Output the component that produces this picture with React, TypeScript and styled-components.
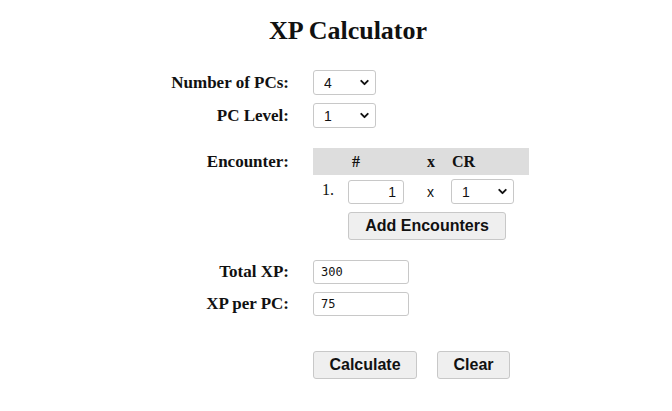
import React, { useState } from "react";
import styled, { createGlobalStyle } from "styled-components";
import { ChevronDown } from "lucide-react";

const GlobalStyle = createGlobalStyle`
    html, body {
        margin: 0;
        padding: 0;
        background: #ffffff;
    }
    body {
        font-family: "Liberation Serif", serif;
        color: #111111;
    }
`;

const Container = styled.div`
    width: 420px;
    margin: 0 auto;
`;

const Title = styled.h1`
    margin: 0;
    padding: 15px 0 0 24px;
    text-align: center;
    font-family: "Liberation Serif", serif;
    font-weight: bold;
    font-size: 26px;
    line-height: 32px;
`;

const Row = styled.div<{ $top?: number }>`
    display: grid;
    grid-template-columns: 163px 1fr;
    column-gap: 24px;
    align-items: center;
    margin-top: ${(p) => p.$top ?? 8}px;
`;

const Label = styled.label<{ $top?: boolean }>`
    text-align: right;
    font-weight: bold;
    font-size: 17px;
    align-self: ${(p) => (p.$top ? "start" : "center")};
    line-height: ${(p) => (p.$top ? "27px" : "normal")};
`;

const SelectWrap = styled.div<{ $width: number }>`
    position: relative;
    width: ${(p) => p.$width}px;
    height: 25px;
`;

const Select = styled.select`
    appearance: none;
    width: 100%;
    height: 100%;
    box-sizing: border-box;
    border: 1px solid #c8c8c8;
    border-radius: 3px;
    background: #fff;
    padding: 0 0 0 10px;
    font-family: "Liberation Sans", Arial, sans-serif;
    font-size: 14px;
    color: #111;
`;

const Chevron = styled(ChevronDown)`
    position: absolute;
    right: 5px;
    top: 6px;
    pointer-events: none;
`;

const TextInput = styled.input<{ $width: number; $right?: boolean }>`
    width: ${(p) => p.$width}px;
    height: 24px;
    box-sizing: border-box;
    border: 1px solid #c8c8c8;
    border-radius: 3px;
    padding: 0 ${(p) => (p.$right ? 7 : 7)}px;
    text-align: ${(p) => (p.$right ? "right" : "left")};
    font-family: ${(p) =>
        p.$right ? `"Liberation Sans", Arial, sans-serif` : `"DejaVu Sans Mono", monospace`};
    font-size: ${(p) => (p.$right ? 14 : 12)}px;
    color: #111;
`;

const EncounterTable = styled.div`
    display: grid;
    grid-template-columns: 35px 56px 47px 78px;
    width: 216px;
    align-items: center;
`;

const HeaderCell = styled.div<{ $pad?: number }>`
    background: #dddddd;
    height: 27px;
    line-height: 27px;
    font-weight: bold;
    font-size: 16px;
    padding-left: ${(p) => p.$pad ?? 0}px;
`;

const IndexCell = styled.div`
    padding: 2px 0 0 9px;
    font-size: 16px;
    align-self: start;
    margin-top: 4px;
`;

const Cell = styled.div`
    margin-top: 4px;
`;

const TimesCell = styled.div`
    margin-top: 4px;
    padding-left: 23px;
    font-family: "Liberation Sans", Arial, sans-serif;
    font-size: 14px;
`;

const ButtonRow = styled.div`
    grid-column: 2 / 5;
    margin-top: 8px;
`;

const Button = styled.button<{ $width: number }>`
    width: ${(p) => p.$width}px;
    height: 28px;
    border: 1px solid #c8c8c8;
    border-radius: 3px;
    background: #efefef;
    font-family: "Liberation Sans", Arial, sans-serif;
    font-weight: bold;
    font-size: 16px;
    color: #111;
    padding: 0;
`;

const Actions = styled.div`
    display: flex;
    gap: 20px;
`;

const Spacer = styled.div``;

const App: React.FC = () => {
    const [pcs, setPcs] = useState("4");
    const [level, setLevel] = useState("1");
    const [count, setCount] = useState("1");
    const [cr, setCr] = useState("1");

    return (
        <Container>
            <GlobalStyle />
            <Title>XP Calculator</Title>
            <Row $top={23}>
                <Label>Number of PCs:</Label>
                <SelectWrap $width={63}>
                    <Select value={pcs} onChange={(e) => setPcs(e.target.value)}>
                        {[1, 2, 3, 4, 5, 6, 7, 8].map((n) => (
                            <option key={n}>{n}</option>
                        ))}
                    </Select>
                    <Chevron size={13} strokeWidth={3.5} />
                </SelectWrap>
            </Row>
            <Row>
                <Label>PC Level:</Label>
                <SelectWrap $width={63}>
                    <Select value={level} onChange={(e) => setLevel(e.target.value)}>
                        {Array.from({ length: 20 }, (_, i) => i + 1).map((n) => (
                            <option key={n}>{n}</option>
                        ))}
                    </Select>
                    <Chevron size={13} strokeWidth={3.5} />
                </SelectWrap>
            </Row>
            <Row $top={20}>
                <Label $top>Encounter:</Label>
                <EncounterTable>
                    <HeaderCell />
                    <HeaderCell $pad={4}>#</HeaderCell>
                    <HeaderCell $pad={23}>x</HeaderCell>
                    <HeaderCell $pad={1}>CR</HeaderCell>
                    <IndexCell>1.</IndexCell>
                    <Cell>
                        <TextInput
                            $width={56}
                            $right
                            value={count}
                            onChange={(e) => setCount(e.target.value)}
                        />
                    </Cell>
                    <TimesCell>x</TimesCell>
                    <Cell>
                        <SelectWrap $width={63}>
                            <Select value={cr} onChange={(e) => setCr(e.target.value)}>
                                {["0", "1/8", "1/4", "1/2", "1", "2", "3", "4", "5"].map((n) => (
                                    <option key={n}>{n}</option>
                                ))}
                            </Select>
                            <Chevron size={13} strokeWidth={3.5} />
                        </SelectWrap>
                    </Cell>
                    <ButtonRow>
                        <Button $width={158}>Add Encounters</Button>
                    </ButtonRow>
                </EncounterTable>
            </Row>
            <Row $top={20}>
                <Label>Total XP:</Label>
                <TextInput $width={96} value="300" readOnly />
            </Row>
            <Row>
                <Label>XP per PC:</Label>
                <TextInput $width={96} value="75" readOnly />
            </Row>
            <Row $top={35}>
                <Spacer />
                <Actions>
                    <Button $width={104}>Calculate</Button>
                    <Button $width={73}>Clear</Button>
                </Actions>
            </Row>
        </Container>
    );
};

export default App;
